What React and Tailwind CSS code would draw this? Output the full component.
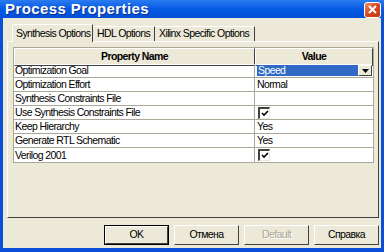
import React from "react";

const rows = [
  { name: "Optimization Goal", value: "select", text: "Speed" },
  { name: "Optimization Effort", value: "text", text: "Normal" },
  { name: "Synthesis Constraints File", value: "text", text: "" },
  { name: "Use Synthesis Constraints File", value: "check" },
  { name: "Keep Hierarchy", value: "text", text: "Yes" },
  { name: "Generate RTL Schematic", value: "text", text: "Yes" },
  { name: "Verilog 2001", value: "check" },
];

function CheckBox() {
  return (
    <div className="w-[12px] h-[12px] bg-white border-t-2 border-l-2 border-t-[#404040] border-l-[#404040] border-r border-b border-r-[#ece9d8] border-b-[#ece9d8] flex items-center justify-center">
      <svg width="8" height="7" viewBox="0 0 8 7">
        <path d="M1 3 L3 5 L7 1" stroke="#000" strokeWidth="1.6" fill="none" />
      </svg>
    </div>
  );
}

function ValueCell({ row }) {
  if (row.value === "select") {
    return (
      <div className="flex items-center h-full pl-[2px] pr-[1px] py-[1px]">
        <div className="flex-1 h-full bg-[#316ac5] text-white flex items-center pl-[1px]">{row.text}</div>
        <div className="w-[14px] h-full bg-[#ece9d8] border border-t-white border-l-white border-r-[#404040] border-b-[#404040] flex items-center justify-center">
          <svg width="7" height="4" viewBox="0 0 7 4">
            <path d="M0 0 H7 L3.5 4 Z" fill="#000" />
          </svg>
        </div>
      </div>
    );
  }
  if (row.value === "check") {
    return (
      <div className="flex items-center h-full pl-[3px]">
        <CheckBox />
      </div>
    );
  }
  return <div className="flex items-center h-full pl-[2px]">{row.text}</div>;
}

function Button({ children, disabled, primary }) {
  return (
    <div className={`w-[65px] h-[20px] flex ${primary ? "border border-black" : ""}`}>
      <div className="flex-1 self-stretch flex items-center justify-center bg-[#ece9d8] border border-t-white border-l-white border-r-[#404040] border-b-[#404040]">
        <span className={disabled ? "text-[#aca899] [text-shadow:1px_1px_#fff]" : "text-black"}>{children}</span>
      </div>
    </div>
  );
}

export default function App() {
  return (
    <div
      className="w-[384px] h-[252px] bg-[#0a4fd8] flex flex-col text-[10.5px] tracking-[-0.6px] text-black"
      style={{ fontFamily: "'Liberation Sans', Arial, sans-serif" }}
    >
      {/* title bar */}
      <div className="h-[18px] flex items-center justify-between pl-[5px] pr-[3px] bg-gradient-to-b from-[#2a7bf0] via-[#0558e4] to-[#0450d8]">
        <span className="text-white font-bold text-[15px] tracking-[0.4px] [text-shadow:1px_1px_#0a2f8a]">Process Properties</span>
        <div className="w-[17px] h-[16px] mt-[1px] rounded-[3px] border border-white bg-gradient-to-br from-[#e98a6e] via-[#d9461f] to-[#c23a12] flex items-center justify-center">
          <svg width="9" height="9" viewBox="0 0 9 9">
            <path d="M1 1 L8 8 M8 1 L1 8" stroke="#fff" strokeWidth="2" />
          </svg>
        </div>
      </div>

      {/* body */}
      <div className="flex-1 mx-[3px] mb-[4px] bg-[#ece9d8] flex flex-col pt-[6px] pl-[4px] pr-[2px]">
        {/* tabs */}
        <div className="flex items-end pl-[5px] h-[17px] whitespace-nowrap">
          <div className="w-[81px] h-[18px] pl-[3px] flex items-center bg-[#ece9d8] border-t border-l border-white border-r border-r-[#404040] rounded-tl-[2px] relative -mb-px z-10">
            Synthesis Options
          </div>
          <div className="w-[62px] h-[15px] pl-[4px] flex items-center border-t border-white border-r border-r-[#404040]">
            HDL Options
          </div>
          <div className="w-[100px] h-[15px] pl-[4px] flex items-center border-t border-white border-r border-r-[#404040]">
            Xilinx Specific Options
          </div>
        </div>

        {/* panel */}
        <div className="h-[177px] bg-[#ece9d8] border border-t-white border-l-white border-r-[#404040] border-b-[#404040] pt-[5px] pl-[5px]">
          <div className="w-[361px] border border-[#aca899] bg-white whitespace-nowrap">
            <div className="grid grid-cols-[241px_118px] h-[16px] bg-[#ece9d8] font-bold">
              <div className="flex items-center justify-center border border-t-white border-l-white border-r-[#404040] border-b-[#404040]">Property Name</div>
              <div className="flex items-center justify-center border border-t-white border-l-white border-r-[#404040] border-b-[#404040]">Value</div>
            </div>
            {rows.map((row, i) => (
              <div key={i} className={`grid grid-cols-[241px_118px] h-[14px] ${i < rows.length - 1 ? "border-b border-[#aca899]" : ""}`}>
                <div className="flex items-center pl-[1px] border-r border-[#aca899] leading-none">{row.name}</div>
                <div className="leading-none">
                  <ValueCell row={row} />
                </div>
              </div>
            ))}
          </div>
        </div>

        {/* buttons */}
        <div className="flex justify-end gap-[5px] mt-[7px]">
          <Button primary>OK</Button>
          <Button>Отмена</Button>
          <Button disabled>Default</Button>
          <Button>Справка</Button>
        </div>
      </div>
    </div>
  );
}
